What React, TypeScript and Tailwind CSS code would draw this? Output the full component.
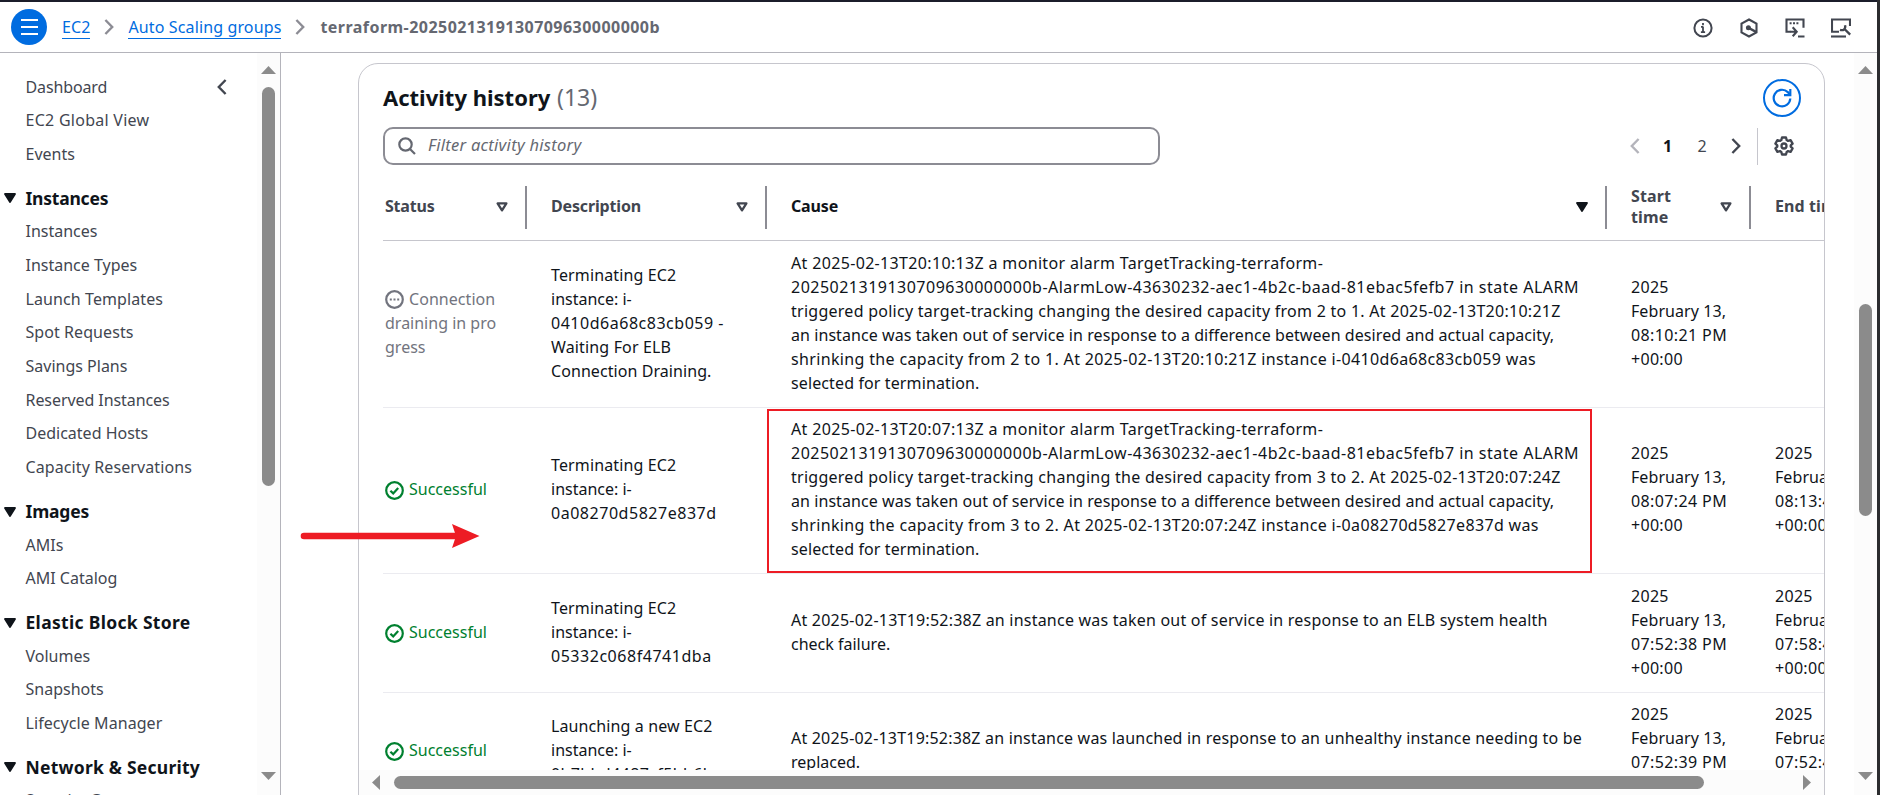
import React from "react";

type Line = { text: string; track?: string };

const TriangleDown = ({ filled = true, className = "" }: { filled?: boolean; className?: string }) => (
  <svg viewBox="0 0 12 10" className={`h-[10px] w-[12px] shrink-0 ${className}`}>
    {filled ? (
      <path d="M1 1h10L6 9z" fill="currentColor" stroke="currentColor" strokeWidth="1.8" strokeLinejoin="round" />
    ) : (
      <path d="M1.6 1.4h8.8L6 8.4z" fill="none" stroke="currentColor" strokeWidth="2.3" strokeLinejoin="round" />
    )}
  </svg>
);

const Chevron = ({ dir, className = "" }: { dir: "left" | "right"; className?: string }) => (
  <svg viewBox="0 0 10 16" className={`h-[16px] w-[10px] shrink-0 ${className}`}>
    <path
      d={dir === "left" ? "M8.6 1L1.8 8l6.8 7" : "M1.4 1l6.8 7-6.8 7"}
      fill="none"
      stroke="currentColor"
      strokeWidth="2.4"
    />
  </svg>
);

const Arrow = ({ dir }: { dir: "up" | "down" | "left" | "right" }) => {
  const paths = { up: "M0 8L7.5 0 15 8z", down: "M0 0h15L7.5 8z", left: "M8 0v15L0 7.5z", right: "M0 0v15L8 7.5z" };
  const vertical = dir === "up" || dir === "down";
  return (
    <svg viewBox={vertical ? "0 0 15 8" : "0 0 8 15"} className={vertical ? "h-[8px] w-[15px]" : "h-[15px] w-[8px]"}>
      <path d={paths[dir]} fill="#8b8b8b" />
    </svg>
  );
};

const CheckCircle = () => (
  <svg viewBox="0 0 19 19" className="mt-[4px] h-[19px] w-[19px] shrink-0" fill="none" stroke="currentColor" strokeWidth="2.2">
    <circle cx="9.5" cy="9.5" r="8.3" />
    <path d="M5.4 9.7l2.8 2.7 5-5.5" />
  </svg>
);

const topLinks = ["Dashboard", "EC2 Global View", "Events"];

const tracks: Record<string, string> = {
  Dashboard: "tracking-[-0.13px]",
  "EC2 Global View": "tracking-[0.27px]",
  "Launch Templates": "tracking-[0.1px]",
  "Spot Requests": "tracking-[0.07px]",
  "Reserved Instances": "tracking-[-0.07px]",
  "Capacity Reservations": "tracking-[0.1px]",
  "Lifecycle Manager": "tracking-[0.07px]",
};

const sections: { title: string; track: string; items: string[] }[] = [
  {
    title: "Instances",
    track: "tracking-[-0.22px]",
    items: [
      "Instances",
      "Instance Types",
      "Launch Templates",
      "Spot Requests",
      "Savings Plans",
      "Reserved Instances",
      "Dedicated Hosts",
      "Capacity Reservations",
    ],
  },
  { title: "Images", track: "tracking-[-0.18px]", items: ["AMIs", "AMI Catalog"] },
  { title: "Elastic Block Store", track: "tracking-[0.32px]", items: ["Volumes", "Snapshots", "Lifecycle Manager"] },
  { title: "Network & Security", track: "tracking-[0.24px]", items: ["Security Groups"] },
];

type Row = {
  status: "draining" | "ok";
  size: string;
  description: Line[];
  cause: Line[];
  start: string;
  end?: string;
};

const scaleCause = (alarm: string, from: number, to: number, at: string, id: string): Line[] => [
  { text: `At 2025-02-13T${alarm}Z a monitor alarm TargetTracking-terraform-`, track: "tracking-[0.34px]" },
  {
    text: "2025021319130709630000000b-AlarmLow-43630232-aec1-4b2c-baad-81ebac5fefb7 in state ALARM",
    track: "tracking-[0.49px]",
  },
  {
    text: `triggered policy target-tracking changing the desired capacity from ${from} to ${to}. At 2025-02-13T${at}Z`,
    track: "tracking-[0.265px]",
  },
  {
    text: "an instance was taken out of service in response to a difference between desired and actual capacity,",
    track: "tracking-[0.07px]",
  },
  {
    text: `shrinking the capacity from ${from} to ${to}. At 2025-02-13T${at}Z instance ${id} was`,
    track: "tracking-[0.347px]",
  },
  { text: "selected for termination.", track: "tracking-[0.12px]" },
];

const rows: Row[] = [
  {
    status: "draining",
    size: "h-[167px] pt-[10px]",
    description: [
      { text: "Terminating EC2", track: "tracking-[0.13px]" },
      { text: "instance: i-" },
      { text: "0410d6a68c83cb059 -", track: "tracking-[0.52px]" },
      { text: "Waiting For ELB", track: "tracking-[0.15px]" },
      { text: "Connection Draining.", track: "tracking-[0.07px]" },
    ],
    cause: scaleCause("20:10:13", 2, 1, "20:10:21", "i-0410d6a68c83cb059"),
    start: "08:10:21 PM",
  },
  {
    status: "ok",
    size: "h-[166px] pt-[9px]",
    description: [
      { text: "Terminating EC2", track: "tracking-[0.13px]" },
      { text: "instance: i-" },
      { text: "0a08270d5827e837d", track: "tracking-[0.53px]" },
    ],
    cause: scaleCause("20:07:13", 3, 2, "20:07:24", "i-0a08270d5827e837d"),
    start: "08:07:24 PM",
    end: "08:13:41 PM",
  },
  {
    status: "ok",
    size: "h-[119px] pt-[10px]",
    description: [
      { text: "Terminating EC2", track: "tracking-[0.13px]" },
      { text: "instance: i-" },
      { text: "05332c068f4741dba", track: "tracking-[0.53px]" },
    ],
    cause: [
      {
        text: "At 2025-02-13T19:52:38Z an instance was taken out of service in response to an ELB system health",
        track: "tracking-[0.22px]",
      },
      { text: "check failure." },
    ],
    start: "07:52:38 PM",
    end: "07:58:41 PM",
  },
  {
    status: "ok",
    size: "h-[119px] pt-[9px]",
    description: [
      { text: "Launching a new EC2", track: "tracking-[0.11px]" },
      { text: "instance: i-" },
      { text: "0b7bbd4487cf5bb6b", track: "tracking-[0.4px]" },
    ],
    cause: [
      {
        text: "At 2025-02-13T19:52:38Z an instance was launched in response to an unhealthy instance needing to be",
        track: "tracking-[0.195px]",
      },
      { text: "replaced." },
    ],
    start: "07:52:39 PM",
    end: "07:52:41 PM",
  },
];

const Lines = ({ lines }: { lines: Line[] }) => (
  <>
    {lines.map((l) => (
      <div key={l.text} className={`whitespace-nowrap ${l.track ?? ""}`}>
        {l.text}
      </div>
    ))}
  </>
);

const Stamp = ({ time }: { time: string }) => (
  <>
    <div className="tracking-[0.3px]">2025</div>
    <div className="whitespace-nowrap tracking-[0.07px]">February 13,</div>
    <div className="whitespace-nowrap tracking-[0.38px]">{time}</div>
    <div className="tracking-[0.3px]">+00:00</div>
  </>
);

const HeaderCell = ({
  width,
  children,
  icon,
}: {
  width: string;
  children: React.ReactNode;
  icon: React.ReactNode;
}) => (
  <div className={`flex h-[43px] shrink-0 items-center justify-between border-r-2 border-[#8c8c94] pr-[17px] ${width}`}>
    {children}
    {icon}
  </div>
);

function Header() {
  return (
    <header className="flex h-[51px] shrink-0 items-center border-b border-[#b4b4bb] pl-[11px] pr-[26px]">
      <button className="flex h-9 w-9 shrink-0 flex-col items-center justify-center gap-[5px] rounded-full bg-[#006ce0]">
        <span className="h-[2px] w-[17px] bg-white" />
        <span className="h-[2px] w-[17px] bg-white" />
        <span className="h-[2px] w-[17px] bg-white" />
      </button>
      <nav className="flex items-center pl-[15px] text-[16px] leading-[22px]">
        <a className="border-b border-[#006ce0] tracking-[0.1px] text-[#006ce0]">EC2</a>
        <Chevron dir="right" className="ml-[14px] text-[#8c8c94]" />
        <a className="ml-[14px] whitespace-nowrap border-b border-[#006ce0] tracking-[0.13px] text-[#006ce0]">
          Auto Scaling groups
        </a>
        <Chevron dir="right" className="ml-[14px] text-[#8c8c94]" />
        <span className="ml-[15px] font-bold tracking-[0.46px] text-[#656871]">terraform-2025021319130709630000000b</span>
      </nav>
      <div className="ml-auto flex items-center gap-[26px] pt-px text-[#424650]">
        <svg viewBox="0 0 20 20" className="h-5 w-5" fill="none" stroke="currentColor" strokeWidth="2">
          <circle cx="10" cy="10" r="8.6" />
          <path d="M10 5v2.2M10 8.5v5M8 8.9h2M7.900 14.2h4.200" strokeWidth="1.8" />
        </svg>
        <svg viewBox="0 0 20 20" className="h-5 w-5" fill="none" stroke="currentColor" strokeWidth="2.1">
          <path d="M10 1.500l7.500 4.200v8.600L10 18.500l-7.500-4.200V5.700z" />
          <circle cx="9.400" cy="9.700" r="2.500" fill="currentColor" stroke="none" />
          <path d="M9.400 9.700l8 4.400" strokeWidth="2.400" />
        </svg>
        <svg viewBox="0 0 20 20" className="h-5 w-5" fill="none" stroke="currentColor" strokeWidth="2.1">
          <path d="M5.500 13.700H1.500V1.500h17v8.300" />
          <path d="M4.600 5.200h2M8 5.200h2M11.400 5.200h2" />
          <path d="M5 13.700h6.200M7.700 9.200l4 4.500-4 4.500M13 18.500h6.500" />
        </svg>
        <svg viewBox="0 0 20 20" className="h-5 w-5" fill="none" stroke="currentColor" strokeWidth="2.1">
          <path d="M8 13.700H1V1.500h18v6.500" />
          <path d="M0 18.500h15" />
          <path d="M9 11.800c3.400 1.200 6-1 5-4.600M13.500 11l5.700 5.600" strokeWidth="2.400" />
        </svg>
      </div>
    </header>
  );
}

function Sidebar() {
  return (
    <aside className="flex w-[281px] shrink-0 overflow-hidden border-r border-[#b4b4bb]">
      <div className="w-[257px] shrink-0 pt-[17px] text-[#424650]">
        {topLinks.map((t, i) => (
          <div key={t} className="flex h-[33.6px] items-center justify-between pl-[25.5px] pr-[30px]">
            <span className={`leading-6 ${tracks[t] ?? ""}`}>{t}</span>
            {i === 0 && <Chevron dir="left" />}
          </div>
        ))}
        {sections.map((s) => (
          <div key={s.title}>
            <div className="mb-[4.5px] mt-[15.2px] flex h-6 items-center text-[#0f141a]">
              <TriangleDown className="ml-[3.5px] mt-[1px]" />
              <span className={`ml-[10px] whitespace-nowrap text-[17.5px] font-bold leading-6 ${s.track}`}>{s.title}</span>
            </div>
            {s.items.map((t) => (
              <div key={t} className={`flex h-[33.7px] items-center pl-[25.5px] leading-6 ${tracks[t] ?? ""}`}>
                {t}
              </div>
            ))}
          </div>
        ))}
      </div>
      <div className="flex w-[23px] flex-col items-center bg-[#fcfcfc] pb-[15px] pt-[13px]">
        <Arrow dir="up" />
        <div className="mt-[13px] h-[399px] w-[13px] rounded-full bg-[#8b8b8b]" />
        <div className="mt-auto">
          <Arrow dir="down" />
        </div>
      </div>
    </aside>
  );
}

function Toolbar() {
  return (
    <div className="pl-[24px] pr-[23px] pt-[15px]">
      <div className="flex h-[38px] items-center justify-between">
        <h2 className="pb-[2px] text-[22px] leading-8">
          <span className="font-bold text-[#0f141a]">Activity history</span>{" "}
          <span className="ml-px text-[23px] text-[#656871]">(13)</span>
        </h2>
        <button className="flex h-[38px] w-[38px] items-center justify-center rounded-full border-2 border-[#006ce0] text-[#006ce0]">
          <svg viewBox="0 0 20 20" className="h-5 w-5" fill="none" stroke="currentColor" strokeWidth="2.2">
            <path d="M18.300 10.500A8.300 8.300 0 1 1 15.800 4.100L18 6.800" />
            <path d="M18.300 1v6.200H12" />
          </svg>
        </button>
      </div>
      <div className="mt-[10px] flex items-center">
        <div className="flex h-[38px] w-[777px] items-center rounded-[10px] border-2 border-[#8c8c94] pl-[13px]">
          <svg viewBox="0 0 18 18" className="h-[18px] w-[18px]" fill="none" stroke="#656871" strokeWidth="2.2">
            <circle cx="7.500" cy="7.500" r="6.200" />
            <path d="M12 12l5 5" />
          </svg>
          <span className="ml-[12px] pb-[2px] text-[16.5px] italic leading-6 tracking-[0.28px] text-[#656871]">
            Filter activity history
          </span>
        </div>
        <div className="ml-auto flex items-center pr-[7px] text-[#424650]">
          <Chevron dir="left" className="text-[#b4b4bb]" />
          <span className="ml-[23px] w-[9px] pb-px text-center font-bold leading-6 text-[#0f141a]">1</span>
          <span className="ml-[25px] w-[10px] pb-px text-center leading-6">2</span>
          <Chevron dir="right" className="ml-[24px]" />
          <div className="ml-[16px] h-[37px] w-px bg-[#c6c6cd]" />
          <svg viewBox="0 0 20 20" className="ml-[16px] h-5 w-5" fill="none" stroke="currentColor" strokeWidth="2.3">
            <path
              d="M8 1.500h4l.7 2.600 1.300.8 2.600-.8 2 3.500-1.900 1.800v1.200l1.900 1.800-2 3.500-2.600-.8-1.300.8-.7 2.600H8l-.7-2.600-1.300-.8-2.600.8-2-3.500 1.900-1.800V9.400L1.400 7.600l2-3.500 2.600.8 1.300-.8z"
              strokeLinejoin="round"
            />
            <circle cx="10" cy="10" r="2.500" />
          </svg>
        </div>
      </div>
    </div>
  );
}

function Table() {
  return (
    <div className="h-[605px] overflow-hidden pl-[24px]">
      <div className="w-[1600px]">
        <div className="flex h-[76px] items-center border-b border-[#c6c6cd] pt-[9px] font-bold leading-[21px] text-[#424650]">
          <HeaderCell width="w-[144px] pl-[2px]" icon={<TriangleDown filled={false} />}>
            <span className="pb-[2px] tracking-[-0.2px]">Status</span>
          </HeaderCell>
          <HeaderCell width="w-[240px] pl-[24px]" icon={<TriangleDown filled={false} />}>
            <span className="pb-[2px] tracking-[-0.15px]">Description</span>
          </HeaderCell>
          <HeaderCell width="w-[840px] pl-[24px] text-[#0f141a]" icon={<TriangleDown />}>
            <span className="pb-[2px] tracking-[-0.15px]">Cause</span>
          </HeaderCell>
          <HeaderCell width="w-[144px] pl-[24px]" icon={<TriangleDown filled={false} />}>
            <span className="w-[50px] tracking-[0.1px]">Start time</span>
          </HeaderCell>
          <div className="whitespace-nowrap pb-[2px] pl-[24px] tracking-[0.1px]">End time</div>
        </div>
        {rows.map((r, i) => (
          <div key={i} className={`flex items-start border-b border-[#ebebf0] leading-6 text-[#0f141a] ${r.size}`}>
            <div className={r.cause.length === 6 ? "flex h-[144px] items-center" : "flex h-[96px] items-center"}>
              <div className="w-[144px] shrink-0 pl-[2px]">
                {r.status === "ok" ? (
                  <div className="flex text-[#00802f]">
                    <CheckCircle />
                    <span className="ml-[5px]">Successful</span>
                  </div>
                ) : (
                  <div className="text-[#72747e]">
                    <div className="flex">
                      <svg
                        viewBox="0 0 19 19"
                        className="mt-[3px] h-[19px] w-[19px] shrink-0"
                        fill="none"
                        stroke="currentColor"
                        strokeWidth="2.2"
                      >
                        <circle cx="9.500" cy="9.500" r="8.300" />
                        <path d="M4.800 9.500h2M8.500 9.500h2M12.200 9.500h2" />
                      </svg>
                      <span className="ml-[5px] tracking-[0.05px]">Connection</span>
                    </div>
                    <div>draining in pro</div>
                    <div>gress</div>
                  </div>
                )}
              </div>
              <div className="w-[240px] shrink-0 pl-[24px]">
                <Lines lines={r.description} />
              </div>
              <div className="w-[840px] shrink-0 pl-[24px]">
                <Lines lines={r.cause} />
              </div>
              <div className="w-[144px] shrink-0 pl-[24px]">
                <Stamp time={r.start} />
              </div>
              <div className="w-[144px] shrink-0 pl-[24px]">{r.end && <Stamp time={r.end} />}</div>
            </div>
          </div>
        ))}
      </div>
    </div>
  );
}

export default function App() {
  return (
    <div className="relative flex h-[795px] w-[1880px] overflow-hidden bg-[#2b2c2f] font-['Noto_Sans','Open_Sans',sans-serif] text-[16px]">
      <div className="flex w-[1877px] flex-col border-t-2 border-[#1b1d2a] bg-white">
        <Header />
        <div className="flex min-h-0 flex-1">
          <Sidebar />
          <main className="flex-1 overflow-hidden pl-[77px] pt-[10px]">
            <section className="h-[800px] w-[1467px] overflow-hidden rounded-[20px] border border-[#c6c6cd]">
              <Toolbar />
              <Table />
              <div className="flex h-[25px] items-center bg-[#fcfcfc] pb-px pl-[13px] pr-[13px]">
                <Arrow dir="left" />
                <div className="ml-[14px] h-[13px] w-[1310px] rounded-full bg-[#8b8b8b]" />
                <div className="ml-auto">
                  <Arrow dir="right" />
                </div>
              </div>
            </section>
          </main>
          <div className="flex w-[23px] flex-col items-center bg-[#fcfcfc] pb-[15px] pt-[13px]">
            <Arrow dir="up" />
            <div className="mt-[230px] h-[212px] w-[13px] rounded-full bg-[#8b8b8b]" />
            <div className="mt-auto">
              <Arrow dir="down" />
            </div>
          </div>
        </div>
      </div>
      <div className="absolute left-[767px] top-[409px] h-[164px] w-[825px] border-2 border-[#ed1c24]" />
      <svg viewBox="0 0 180 24" className="absolute left-[300px] top-[524px] h-[24px] w-[180px]">
        <path d="M4 12h154" stroke="#ed1c24" strokeWidth="6.6" strokeLinecap="round" />
        <path d="M152 0l27.500 12L152 24l4-12z" fill="#ed1c24" />
      </svg>
    </div>
  );
}
